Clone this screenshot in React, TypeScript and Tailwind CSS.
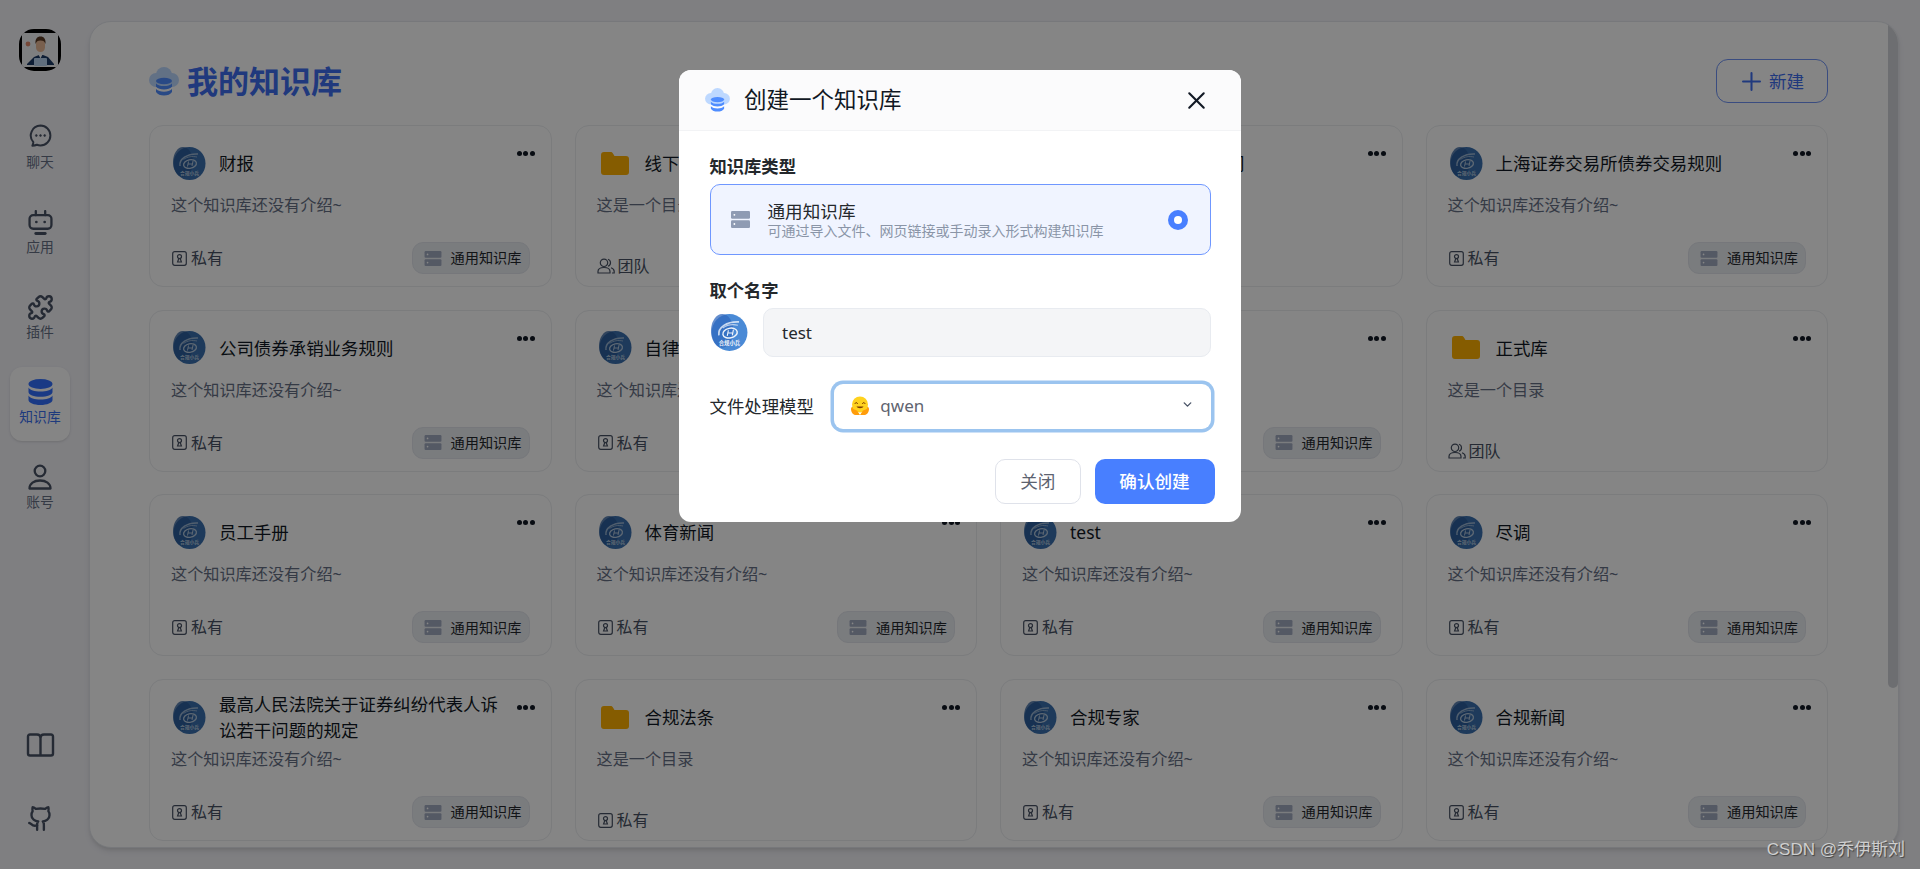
import React from "react";
import { Plus, Puzzle, X, ChevronDown } from "lucide-react";

type Kb = {
  title: string;
  desc?: string;
  folder?: boolean;
  access?: "私有" | "团队";
};

const rows: Kb[] = [
  { title: "财报" },
  { title: "线下资料", folder: true, desc: "这是一个目录", access: "团队" },
  { title: "证券公司债券承销合同", folder: true, desc: "这是一个目录", access: "团队" },
  { title: "上海证券交易所债券交易规则" },
  { title: "公司债券承销业务规则" },
  { title: "自律规则" },
  { title: "债券发行规则" },
  { title: "正式库", folder: true, desc: "这是一个目录", access: "团队" },
  { title: "员工手册" },
  { title: "体育新闻" },
  { title: "test" },
  { title: "尽调" },
  { title: "最高人民法院关于证券纠纷代表人诉讼若干问题的规定" },
  { title: "合规法条", folder: true, desc: "这是一个目录", access: "私有" },
  { title: "合规专家" },
  { title: "合规新闻" },
];

// 圆形 logo
function Logo({ size, bright }: { size: number; bright?: boolean }) {
  const line = bright ? "#eef4fb" : "#b4c8dd";
  return (
    <svg width={size} height={size} viewBox="0 0 33 33" className="shrink-0">
      <ellipse cx="16.5" cy="16.5" rx="16" ry="16.5" fill={bright ? "#4a8ad6" : "#3a70ae"} />
      <ellipse cx="10" cy="15" rx="10" ry="15" fill={bright ? "#3068bd" : "#285a98"} opacity="0.75" />
      <path d="M7 19C6 12 14 6.500 25 7" stroke={line} strokeWidth="1.500" fill="none" opacity="0.8" />
      <path d="M10.500 12.500c4-3 9-3.500 13.500-2.500" stroke={line} strokeWidth="1" fill="none" opacity="0.7" />
      <ellipse cx="17" cy="17" rx="6.500" ry="4.300" stroke={line} strokeWidth="1.300" fill="none" transform="rotate(-12 17 17)" />
      <path d="M14.500 19.500l1-5M19 19l1-5M15 17h4.500" stroke={line} strokeWidth="1" fill="none" />
      <text x="16.5" y="27.500" fontSize="4.800" fontWeight="700" fill={line} textAnchor="middle">
        合规小兵
      </text>
    </svg>
  );
}

function CloudDb({ className }: { className: string }) {
  return (
    <svg viewBox="0 0 30 29" className={className}>
      <circle cx="15" cy="8" r="8" fill="#bdd8ff" />
      <circle cx="7" cy="13" r="7" fill="#bdd8ff" />
      <circle cx="23" cy="13" r="7" fill="#bdd8ff" />
      <rect x="7" y="10" width="16" height="10" fill="#bdd8ff" />
      <ellipse cx="15" cy="14" rx="8" ry="3.2" fill="#4f8dff" />
      <path d="M7 16.5c2 2 4.500 2.600 8 2.600s6-.6 8-2.600v3.200c-2 2-4.500 2.700-8 2.700s-6-.7-8-2.700z" fill="#4f8dff" />
      <path d="M7 22c2 2 4.500 2.700 8 2.700s6-.7 8-2.700v3c-1.500 2.400-4.500 3.500-8 3.500s-6.500-1.100-8-3.500z" fill="#4f8dff" />
    </svg>
  );
}

// 堆叠服务器图标
function ServerIcon({ className, color }: { className: string; color: string }) {
  return (
    <svg viewBox="0 0 18 16" className={className}>
      <rect x="0" y="0" width="18" height="7.300" rx="1.200" fill={color} />
      <rect x="0" y="8.700" width="18" height="7.300" rx="1.200" fill={color} />
      <circle cx="3.200" cy="3.600" r="0.900" fill="#fff" />
      <circle cx="3.200" cy="12.300" r="0.900" fill="#fff" />
    </svg>
  );
}

function LockIcon() {
  return (
    <svg viewBox="0 0 15 15" className="w-[15px] h-[15px] ml-[1px] shrink-0" fill="none" stroke="#485264" strokeWidth="1.200">
      <rect x="0.700" y="0.700" width="13.600" height="13.600" rx="2" />
      <circle cx="7.500" cy="5.600" r="2" />
      <path d="M6.800 7.500L5.600 11h3.800L8.200 7.500" />
    </svg>
  );
}

function TeamIcon() {
  return (
    <svg viewBox="0 0 18 16" className="w-[18px] h-[16px] shrink-0" fill="none" stroke="#485264" strokeWidth="1.200">
      <circle cx="7" cy="4.800" r="3.700" />
      <path d="M1 15v-1.500c0-2.500 2.500-4 6-4s6 1.500 6 4V15z" />
      <path d="M11 1.300a3.700 3.700 0 0 1 0 7M14 9.800c1.800.6 3.200 1.800 3.200 3.700V15H15" />
    </svg>
  );
}

function FolderIcon() {
  return (
    <svg viewBox="0 0 28 23" className="w-[28px] h-[23px]">
      <path
        d="M3 0h6.500c1 0 1.800.5 2.300 1.300L13.500 4H25a3 3 0 0 1 3 3v13a3 3 0 0 1-3 3H3a3 3 0 0 1-3-3V3a3 3 0 0 1 3-3z"
        fill="#ffb000"
      />
    </svg>
  );
}

function Card({ item }: { item: Kb }) {
  const folder = !!item.folder;
  return (
    <div className="relative flex flex-col h-[162px] rounded-[14px] border border-[#ebedf0] bg-white pt-[11px] pb-[12px] pl-[21px] pr-[21px]">
      <button className="absolute top-[25px] right-[16px] flex gap-[1.500px]">
        <span className="w-[5px] h-[5px] rounded-full bg-[#111824]" />
        <span className="w-[5px] h-[5px] rounded-full bg-[#111824]" />
        <span className="w-[5px] h-[5px] rounded-full bg-[#111824]" />
      </button>
      <div className="flex items-center h-[52px] pl-[2px] pr-[24px] shrink-0">
        <div className="w-[33px] flex justify-center shrink-0">
          {folder ? <FolderIcon /> : <Logo size={33} />}
        </div>
        <div className="ml-[13px] text-[17.450px] leading-[26px] text-[#111824]">{item.title}</div>
      </div>
      <div className="mt-[5px] text-[16.170px] leading-[22px] text-[#667085]">
        {item.desc ?? "这个知识库还没有介绍~"}
      </div>
      {folder ? (
        <div className="mt-auto -mb-[3px] flex items-end h-[32px] text-[16px] leading-[22px] text-[#485264]">
          <div className="flex items-center gap-[3px]">
            {item.access === "团队" ? <TeamIcon /> : <LockIcon />}
            <span className={item.access === "团队" ? "" : "ml-[1px]"}>{item.access}</span>
          </div>
        </div>
      ) : (
        <div className="mt-auto flex items-center justify-between h-[32px]">
          <div className="flex items-center gap-[4px] text-[16px] text-[#485264]">
            <LockIcon />
            <span>私有</span>
          </div>
          <div className="flex items-center h-[32px] w-[118px] pl-[11px] rounded-[11px] bg-[#eaedf2] border border-[#e2e5eb]">
            <ServerIcon className="w-[18px] h-[15px] shrink-0" color="#a1abc0" />
            <span className="ml-[9px] text-[14.200px] text-[#24282c] whitespace-nowrap">通用知识库</span>
          </div>
        </div>
      )}
    </div>
  );
}

function NavItem({ label, icon, active }: { label: string; icon: React.ReactNode; active?: boolean }) {
  return (
    <div
      className={`flex flex-col items-center w-[60px] h-[74px] pt-[12px] rounded-[12px] ${
        active ? "bg-white shadow-sm" : ""
      }`}
    >
      <div className="h-[26px] flex items-center justify-center">{icon}</div>
      <div className={`mt-[2px] text-[13.800px] leading-[20px] ${active ? "text-[#3b6ff0]" : "text-[#667085]"}`}>
        {label}
      </div>
    </div>
  );
}

function PersonAvatar() {
  return (
    <div className="w-[46px] h-[46px] rounded-full bg-[#f7f8fa] flex items-center justify-center">
      <svg viewBox="0 0 42 42" className="w-[42px] h-[42px]">
        <rect width="42" height="42" rx="15" fill="#000" />
        <rect x="3" y="4" width="36" height="34" rx="2" fill="#f2f3f5" />
        <circle cx="9" cy="15" r="2.400" fill="#e08a6b" />
        <path d="M8 35l7-7 5-2h4l5 2 6 7v1H8z" fill="#1c3a66" />
        <rect x="17" y="10" width="9" height="13" rx="4.500" fill="#e9b996" />
        <path d="M16.500 15c-.5-5 1.500-7.500 5-7.500s5.500 2.500 5 7.500c-1-2.500-2-3.500-5-3.500s-4 1-5 3.500z" fill="#5b3a24" />
        <path d="M19.500 25.500h4l-2 4z" fill="#fff" />
        <rect x="15" y="29" width="13" height="8" rx="1" fill="#b9d4f0" />
      </svg>
    </div>
  );
}

export default function App() {
  return (
    <div className="relative flex h-screen overflow-hidden bg-[#f3f3f8] [font-family:'Noto_Sans','Noto_Sans_CJK_SC',sans-serif]">
      {/* 左侧导航 */}
      <aside className="w-[89px] shrink-0 flex flex-col items-center pb-[37px]">
        <div className="mt-[27px] -ml-[9px]">
          <PersonAvatar />
        </div>
        <nav className="mt-[39px] flex flex-col gap-[11px] -ml-[9px]">
          <NavItem
            label="聊天"
            icon={
              <svg viewBox="0 0 24 24" className="w-[25px] h-[25px] -mt-[3px]" fill="none" stroke="#485264" strokeWidth="1.900">
                <path d="M12 2.500a9.500 9.500 0 1 1 0 19c-1.200 0-2.400-.2-3.400-.6-1.300.5-2.600.8-4.400.9.600-1.200.9-2.300.9-3.500A9.500 9.500 0 0 1 12 2.500z" strokeLinejoin="round" />
                <circle cx="8" cy="12" r="0.900" fill="#485264" strokeWidth="0.600" />
                <circle cx="12" cy="12" r="0.900" fill="#485264" strokeWidth="0.600" />
                <circle cx="16" cy="12" r="0.900" fill="#485264" strokeWidth="0.600" />
              </svg>
            }
          />
          <NavItem
            label="应用"
            icon={
              <svg viewBox="0 0 24 24" className="w-[25px] h-[25px]" fill="none" stroke="#485264" strokeWidth="2.200" strokeLinecap="round">
                <path d="M7.500 1v4M16.500 1v4" />
                <rect x="1.500" y="5" width="21" height="13" rx="3.500" />
                <path d="M7.500 22.500h9" strokeWidth="2.800" />
                <circle cx="8" cy="11.500" r="1.300" fill="#485264" stroke="none" />
                <circle cx="16" cy="11.500" r="1.300" fill="#485264" stroke="none" />
              </svg>
            }
          />
          <NavItem label="插件" icon={<Puzzle size={27} color="#485264" strokeWidth={2.100} />} />
          <NavItem
            label="知识库"
            active
            icon={
              <svg viewBox="0 0 24 26" className="w-[25px] h-[26px]" fill="#3370ff">
                <ellipse cx="12" cy="5" rx="12" ry="5" />
                <path d="M0 8.500c1.500 2.800 6 4 12 4s10.500-1.200 12-4V13c0 2.800-5.400 4.800-12 4.800S0 15.800 0 13z" />
                <path d="M0 16.500c1.500 2.800 6 4 12 4s10.500-1.200 12-4V21c0 2.800-5.400 5-12 5S0 23.800 0 21z" />
              </svg>
            }
          />
          <NavItem
            label="账号"
            icon={
              <svg viewBox="0 0 24 26" className="w-[24px] h-[26px]" fill="none" stroke="#485264" strokeWidth="2.300">
                <circle cx="12" cy="7" r="5.300" />
                <path d="M1.500 24.500c0-5 4.500-8 10.500-8s10.500 3 10.500 8z" strokeLinejoin="round" />
              </svg>
            }
          />
        </nav>
        <div className="mt-auto flex flex-col items-center gap-[48px] -ml-[9px]">
          <svg viewBox="0 0 28 24" className="w-[29px] h-[24px]" fill="none" stroke="#485264" strokeWidth="2.400" strokeLinejoin="round">
            <path d="M14 5c0-2-1.500-3.500-3.500-3.500H3.500C2.300 1.500 1.500 2.300 1.500 3.500v17c0 1.200.8 2 2 2h21c1.200 0 2-.8 2-2v-17c0-1.200-.8-2-2-2h-7C15.500 1.500 14 3 14 5v17.500" />
          </svg>
          <svg viewBox="0 0 24 24" className="w-[27px] h-[27px]" fill="none" stroke="#485264" strokeWidth="2.100" strokeLinecap="round" strokeLinejoin="round">
            <path d="M15 22v-4a4.800 4.800 0 0 0-1-3.500c3 0 6-2 6-5.500.08-1.250-.27-2.480-1-3.500.28-1.150.28-2.350 0-3.500 0 0-1 0-3 1.500-2.640-.5-5.360-.5-8 0C6 2 5 2 5 2c-.3 1.150-.3 2.350 0 3.500A5.403 5.403 0 0 0 4 9c0 3.500 3 5.500 6 5.500-.39.490-.68 1.050-.85 1.650-.17.600-.22 1.230-.15 1.850v4" />
            <path d="M9 18c-4.510 2-5-2-7-2" />
          </svg>
        </div>
      </aside>

      {/* 主体 */}
      <main className="flex flex-1 min-w-0 my-[21px] mr-[21px] rounded-[22px] border border-[#e4e7ec] bg-white shadow-md overflow-hidden">
        <div className="flex-1 min-w-0 overflow-hidden">
          <div className="pl-[59px] pr-[60px] pt-[37px]">
            <div className="flex items-center justify-between h-[44px] mb-[22px]">
              <div className="flex items-center gap-[8px]">
                <CloudDb className="w-[30px] h-[29px]" />
                <h1 className="text-[31px] font-bold text-[#3f6ef0]">我的知识库</h1>
              </div>
              <button className="flex items-center pl-[20px] gap-[3px] w-[112px] h-[44px] rounded-[12px] border border-[#6f93f5] text-[#3f6ef0] text-[17.600px]">
                <Plus size={29} strokeWidth={1.700} />
                新建
              </button>
            </div>
            <div className="grid grid-cols-4 gap-x-[23px] gap-y-[22.700px]">
              {rows.map((item) => (
                <Card key={item.title} item={item} />
              ))}
            </div>
          </div>
        </div>
        {/* 滚动条 */}
        <div className="w-[10px] shrink-0">
          <div className="h-[666px] rounded-b-[5px] bg-[#d2d3d8]" />
        </div>
      </main>

      {/* 弹窗遮罩 */}
      <div className="absolute inset-0 bg-black/48 flex justify-center items-start">
        <div className="mt-[70px] w-[562px] rounded-[12px] bg-white overflow-hidden">
          <div className="flex items-center justify-between h-[61px] pl-[26px] pr-[30px] bg-[#fbfbfc] border-b border-[#f2f3f5]">
            <div className="flex items-center gap-[14px]">
              <CloudDb className="w-[25px] h-[24px]" />
              <span className="text-[22.500px] text-[#111824]">创建一个知识库</span>
            </div>
            <X size={29} color="#111824" strokeWidth={1.700} />
          </div>
          <div className="px-[30.500px] pt-[24px] pb-[18px]">
            <div className="text-[17.300px] leading-[24px] font-bold text-[#24282c]">知识库类型</div>
            <div className="mt-[5px] flex items-center h-[71px] pl-[20px] pr-[22px] rounded-[10px] border border-[#6f97ff] bg-[#f0f4ff]">
              <ServerIcon className="w-[19px] h-[17px] shrink-0" color="#8f9bb3" />
              <div className="ml-[18px] flex-1">
                <div className="text-[17.600px] leading-[22px] text-[#24282c]">通用知识库</div>
                <div className="text-[14px] leading-[18px] text-[#8a95a7]">可通过导入文件、网页链接或手动录入形式构建知识库</div>
              </div>
              <div className="w-[20px] h-[20px] rounded-full bg-[#487fff] flex items-center justify-center">
                <div className="w-[8px] h-[8px] rounded-full bg-white" />
              </div>
            </div>

            <div className="mt-[24px] text-[17.300px] leading-[24px] font-bold text-[#24282c]">取个名字</div>
            <div className="mt-[4.500px] flex items-center">
              <div className="ml-[1.500px] mr-[15px]">
                <Logo size={37} bright />
              </div>
              <div className="flex-1 flex items-center h-[49px] pl-[18px] pt-[1px] rounded-[10px] bg-[#f4f5f7] border border-[#e8ebf0] text-[17px] text-[#24282c]">
                test
              </div>
            </div>

            <div className="mt-[27px] flex items-center">
              <div className="text-[17.400px] text-[#24282c] whitespace-nowrap">文件处理模型</div>
              <div className="ml-[20px] flex-1 flex items-center h-[45px] pl-[16px] pr-[17px] rounded-[9px] bg-white ring-[3.500px] ring-[#9bc4ef]">
                <svg viewBox="0 0 20 20" className="w-[20px] h-[20px] shrink-0">
                  <path d="M1 13c0-2 2-3 3-2l3 4-1 4c-3 0-5-3-5-6zM19 13c0-2-2-3-3-2l-3 4 1 4c3 0 5-3 5-6z" fill="#ff9d0b" />
                  <circle cx="10" cy="8.500" r="8" fill="#ffd21e" />
                  <path d="M5 7.500c.5-1.300 2-1.300 2.500 0M12.500 7.500c.5-1.300 2-1.300 2.500 0" stroke="#7a3b00" strokeWidth="1" fill="none" strokeLinecap="round" />
                  <path d="M6.500 10.500c1 2.200 6 2.200 7 0z" fill="#7a3b00" />
                  <path d="M3 13l4 1.500 3 4.500H6c-2 0-4-3-3-6zM17 13l-4 1.500-3 4.500h4c2 0 4-3 3-6z" fill="#ff9d0b" />
                </svg>
                <span className="ml-[10.500px] flex-1 text-[17px] text-[#5f6470]">qwen</span>
                <ChevronDown size={13} color="#4a5568" strokeWidth={2.600} className="-mt-[3px]" />
              </div>
            </div>

            <div className="mt-[30.500px] -mr-[4px] flex justify-end gap-[13.500px]">
              <button className="w-[86.500px] h-[45px] rounded-[10px] border border-[#dfe2ea] bg-white text-[17.600px] text-[#5d6370]">关闭</button>
              <button className="w-[120px] h-[45px] rounded-[10px] bg-[#487fff] text-[17.600px] font-medium text-white">确认创建</button>
            </div>
          </div>
        </div>
      </div>

      {/* 水印 */}
      <div className="absolute right-[15px] bottom-[8px] text-[17px] leading-[22px] text-[#cfcfcf] [text-shadow:1px_1px_1px_#444] [font-family:'Liberation_Sans','Noto_Sans_CJK_SC',sans-serif]">
        CSDN @乔伊斯刘
      </div>
    </div>
  );
}
